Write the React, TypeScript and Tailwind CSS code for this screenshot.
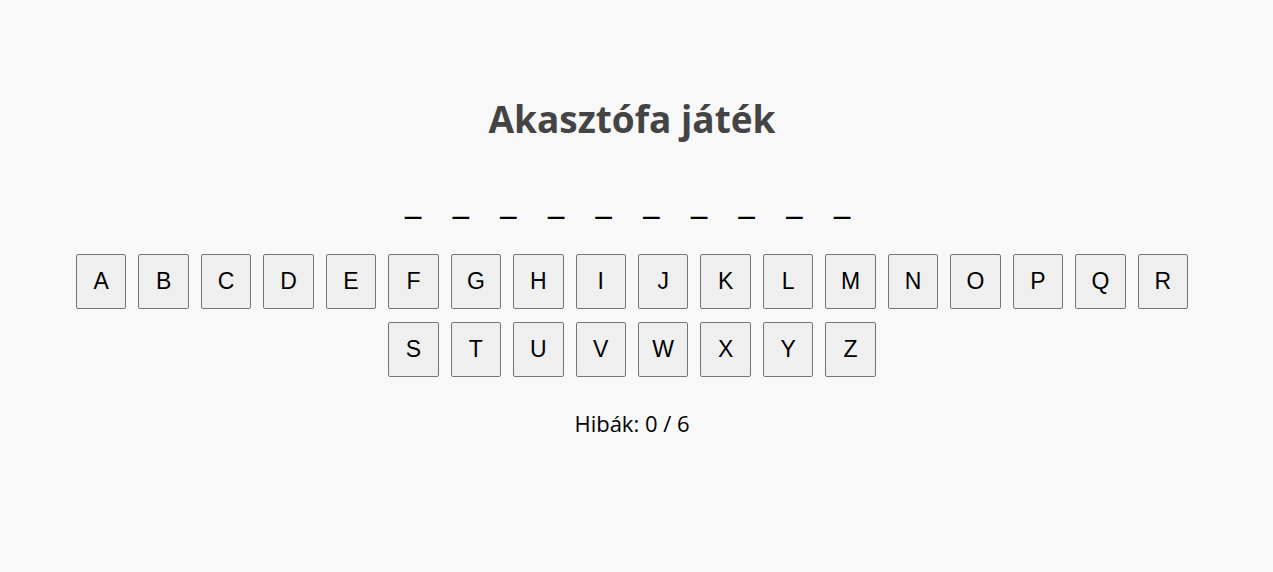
const letters = "ABCDEFGHIJKLMNOPQRSTUVWXYZ".split("");
const word = Array<string>(10).fill("_");

function Key({ letter }: { letter: string }) {
  return (
    <button
      type="button"
      className="h-[55px] rounded-xs border border-[#767676] bg-[#efefef] pb-px font-['Liberation_Sans',Arial,sans-serif] text-[23px] leading-[26px] text-black sm:nth-[19]:col-start-6"
    >
      {letter}
    </button>
  );
}

export default function App() {
  return (
    <main className="flex min-h-screen flex-col items-center bg-[#f8f8f8] px-4 pt-[92px] pr-[25px] font-['Open_Sans','Noto_Sans',sans-serif] text-black">
      <h1 className="text-[37px] leading-[54px] font-bold text-[#444444]">Akasztófa játék</h1>
      <div className="mt-[30px] flex gap-[31px] pr-[9px] text-[38px] leading-[44px] font-medium">
        {word.map((slot, index) => (
          <span key={index}>{slot}</span>
        ))}
      </div>
      <div className="mt-[34px] grid w-full max-w-[1112px] grid-cols-6 gap-x-3 gap-y-[13px] sm:grid-cols-18">
        {letters.map((letter) => (
          <Key key={letter} letter={letter} />
        ))}
      </div>
      <p className="mt-[31px] text-[22px] leading-[30px]">Hibák: 0 / 6</p>
    </main>
  );
}
